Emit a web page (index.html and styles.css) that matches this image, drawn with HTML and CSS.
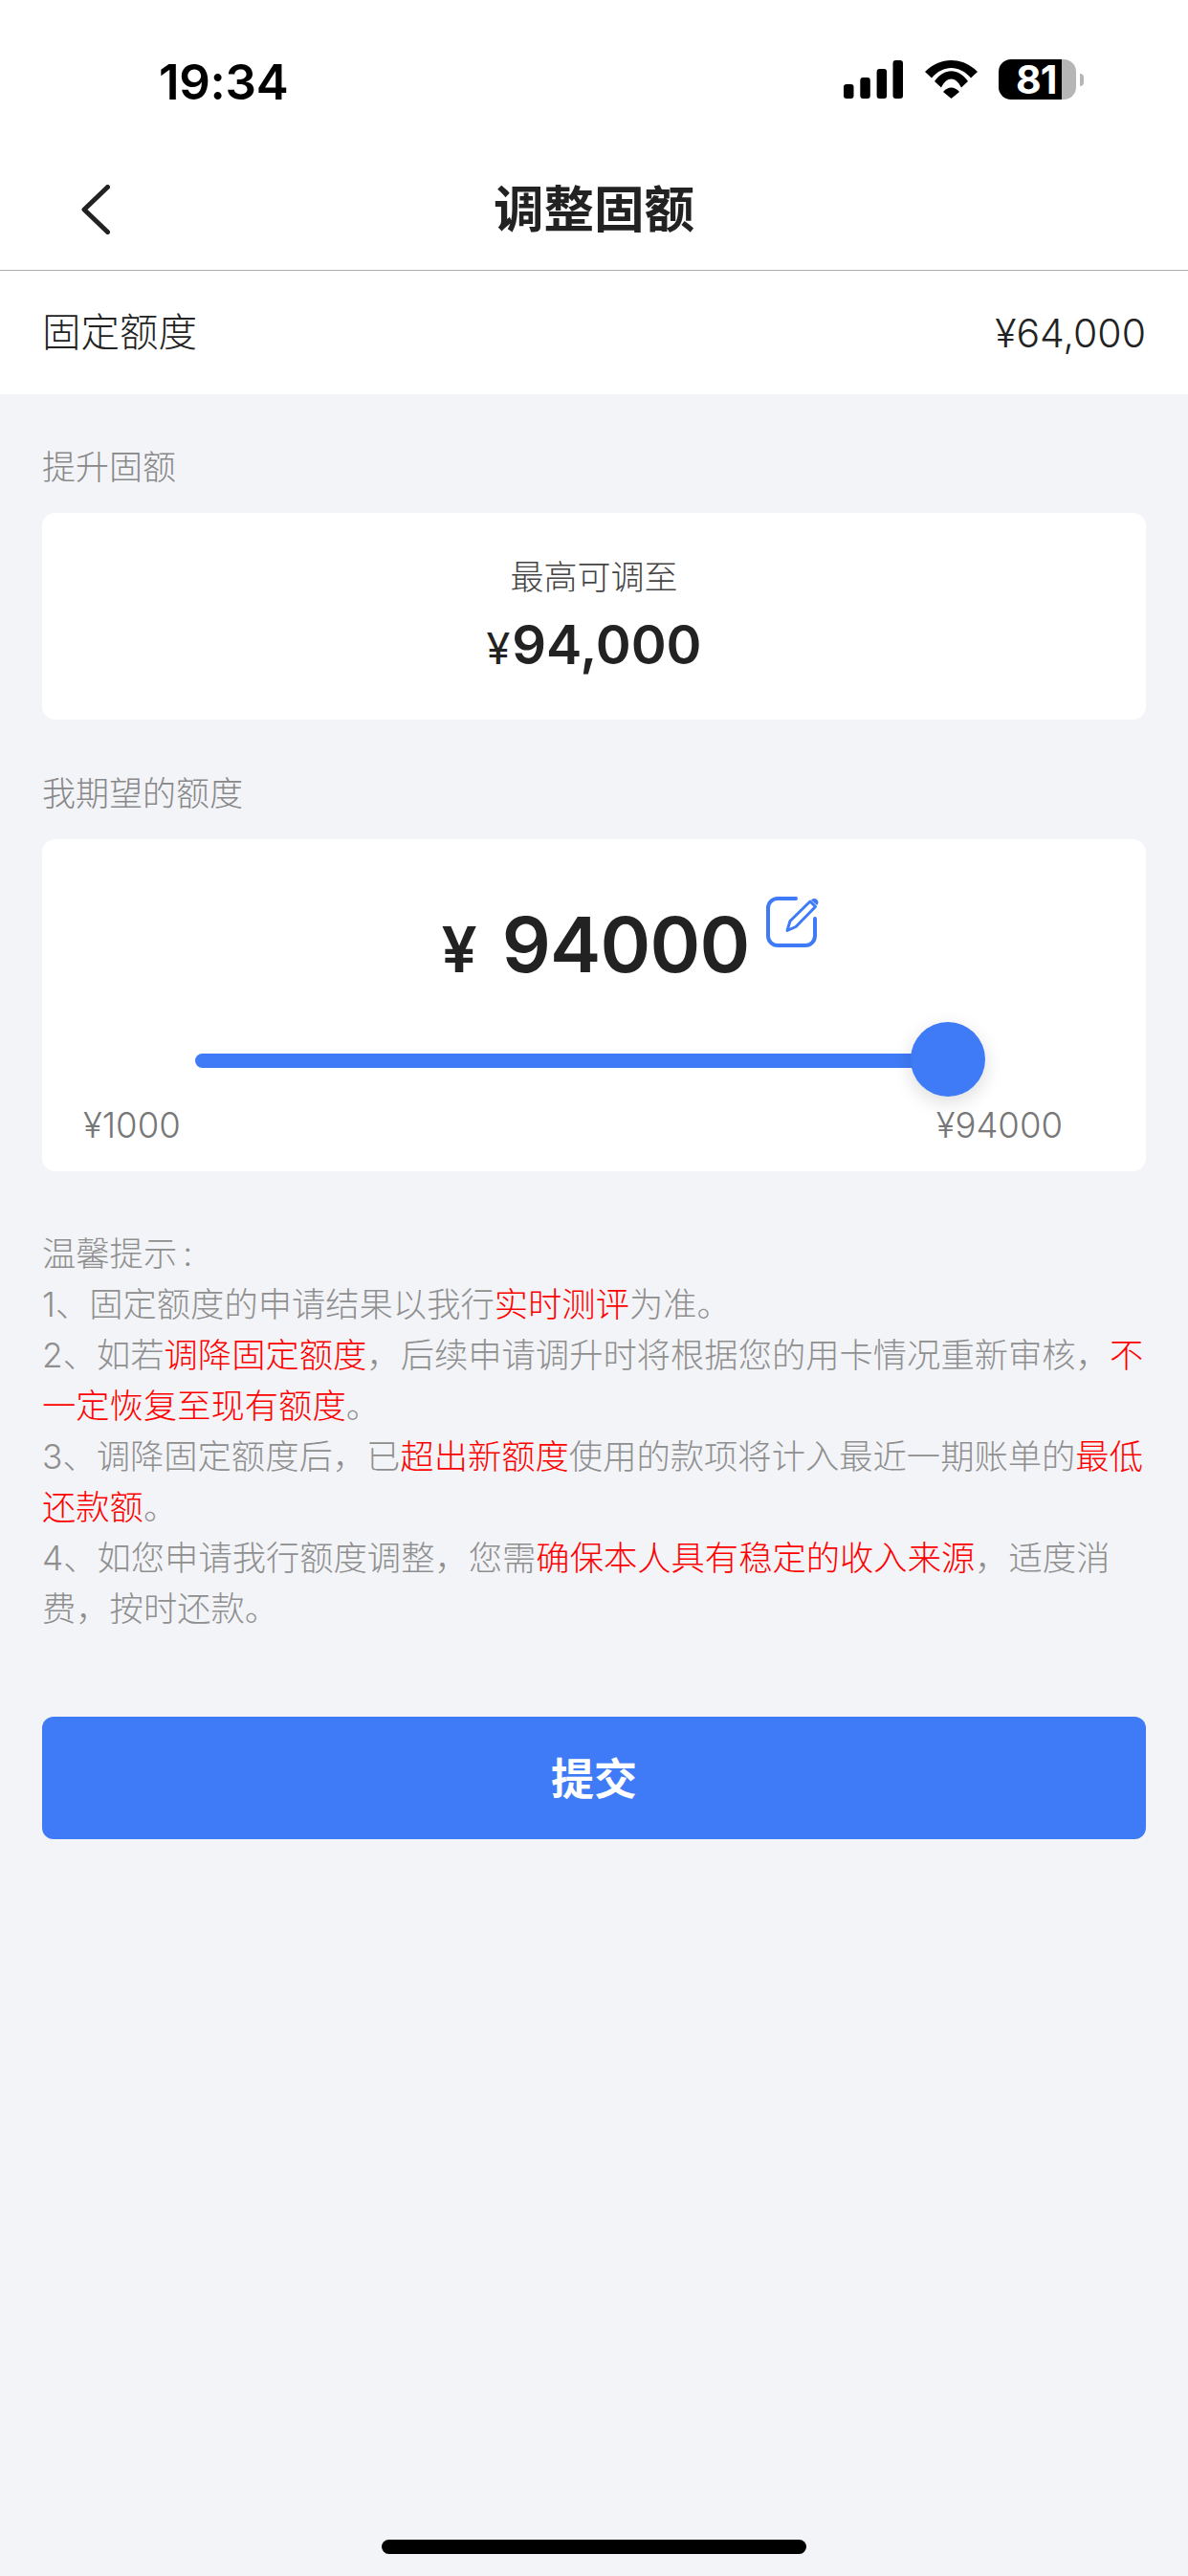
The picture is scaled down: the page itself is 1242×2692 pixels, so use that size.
FILE: index.html
```html
<!DOCTYPE html>
<html lang="zh-CN">
<head>
<meta charset="utf-8">
<title>调整固额</title>
<link rel="stylesheet" href="styles.css">
</head>
<body>
<div class="page">
  <header class="top">
    <div class="status">
      <span class="time">19:34</span>
      <div class="status-icons">
        <svg class="signal" width="62" height="40" viewBox="0 0 62 40"><rect x="0" y="25" width="10.5" height="15" rx="3"/><rect x="17.3" y="18" width="10.5" height="22" rx="3"/><rect x="34.6" y="9" width="10.5" height="31" rx="3"/><rect x="51.5" y="0" width="10.5" height="40" rx="3"/></svg>
        <svg class="wifi" width="55" height="40" viewBox="0 0 55 40"><path d="M0 12C16-4 39-4 55 12L48 18.5C36 4.500 19 4.500 7 18.500Z"/><path d="M10 22C20 7.500 35 7.500 45 22L38 28.500C32 16.500 23 16.500 17 28.500Z"/><path d="M19 33C24 27 31 27 36 33L27.500 40Z"/></svg>
        <div class="battery">
          <div class="battery-body"><span class="battery-num">81</span></div>
          <div class="battery-nub"></div>
        </div>
      </div>
    </div>
    <nav class="nav">
      <svg class="back" width="30" height="52" viewBox="0 0 30 52"><path d="M27.500 2.500L3 26l24.500 23.500"/></svg>
      <h1 class="title">调整固额</h1>
      <span class="nav-end"></span>
    </nav>
    <div class="fixed-row">
      <span class="fixed-label">固定额度</span>
      <span class="num">¥64,000</span>
    </div>
  </header>

  <main class="main">
    <div class="section-label">提升固额</div>
    <section class="card card-max">
      <div class="max-label">最高可调至</div>
      <div class="max-amount"><span class="max-yen">¥</span>94,000</div>
    </section>

    <div class="section-label section-label-next">我期望的额度</div>
    <section class="card card-expect">
      <div class="expect-row">
        <div class="expect-amount">
          <span class="expect-yen">¥</span><span class="expect-num">94000</span>
          <svg class="edit" width="56" height="53" viewBox="0 0 56 53"><path class="edit-box" d="M31 2H12A10 10 0 0 0 2 12V41A10 10 0 0 0 12 51H41A10 10 0 0 0 51 41V23"/><path class="edit-pen" d="M22 35.500L25 25.500L46 5L51.500 10.500L31 31.500Z"/><path class="edit-cap" d="M47 3.500C49 1.500 51 1.500 53 3C55 5 55 7 53 9Z"/></svg>
        </div>
      </div>
      <div class="slider">
        <div class="thumb"></div>
      </div>
      <div class="range">
        <span>¥1000</span>
        <span>¥94000</span>
      </div>
    </section>

    <div class="tips">
      <p>温馨提示<span class="tips-colon">:</span></p>
      <p>1、固定额度的申请结果以我行<em>实时测评</em>为准。</p>
      <p>2、如若<em>调降固定额度</em>，后续申请调升时将根据您的用卡情况重新审核，<em>不一定恢复至现有额度</em>。</p>
      <p>3、调降固定额度后，已<em>超出新额度</em>使用的款项将计入最近一期账单的<em>最低还款额</em>。</p>
      <p>4、如您申请我行额度调整，您需<em>确保本人具有稳定的收入来源</em>，适度消费，按时还款。</p>
    </div>

    <button class="submit"><span class="submit-text">提交</span></button>
  </main>
  <div class="home-indicator"></div>
</div>
</body>
</html>
```
FILE: styles.css
```css
* { box-sizing: border-box; }
html, body { margin: 0; padding: 0; }
body {
  font-family: Inter, "Noto Sans CJK SC", sans-serif;
  color: #222;
  background: #f3f4f8;
}
.page {
  position: relative;
  width: 1242px;
  height: 2692px;
  overflow: hidden;
  display: flex;
  flex-direction: column;
}
.top { background: #fff; }
.status {
  height: 141px;
  padding: 60px 109px 0 166px;
  display: flex;
  justify-content: space-between;
  align-items: flex-start;
}
.time {
  margin-top: 3px;
  font-size: 51px;
  line-height: 46px;
  font-weight: 600;
  color: #000;
  letter-spacing: -0.3px;
}
.status-icons {
  display: flex;
  align-items: center;
  height: 46px;
}
.signal { fill: #000; margin-right: 23px; }
.wifi { fill: #000; margin-right: 22px; }
.battery { display: flex; align-items: center; }
.battery-body {
  width: 81px;
  height: 42px;
  border-radius: 13px;
  background: linear-gradient(90deg, #000 81.5%, #b6b6b6 81.5%);
  display: flex;
  align-items: center;
  padding-left: 18px;
}
.battery-num {
  font-size: 41px;
  line-height: 42px;
  font-weight: 700;
  color: #fff;
  letter-spacing: -1px;
}
.battery-nub {
  width: 4px;
  height: 13px;
  margin-left: 4px;
  border-radius: 0 7px 7px 0;
  background: #b6b6b6;
}
.nav {
  height: 142px;
  padding: 14px 0 0 85px;
  display: grid;
  grid-template-columns: 1fr auto 1fr;
  align-items: center;
  border-bottom: 1px solid #adadad;
}
.back { fill: none; stroke: #222; stroke-width: 5; stroke-linecap: round; stroke-linejoin: round; }
.title {
  margin: 0 0 0 -85px;
  font-size: 52.5px;
  line-height: 70px;
  font-weight: 700;
  color: #222;
}
.fixed-row {
  height: 129px;
  padding: 0 44px;
  display: flex;
  justify-content: space-between;
  align-items: center;
  font-size: 40px;
  color: #222;
}
.fixed-label {
  font-size: 40.5px;
  font-weight: 300;
  margin-bottom: 6px;
}
.num { font-size: 41px; font-weight: 300; }
.main {
  padding: 0 44px;
  display: flex;
  flex-direction: column;
}
.section-label {
  margin-top: 51px;
  height: 50px;
  margin-bottom: 23px;
  font-size: 35px;
  font-weight: 300;
  line-height: 50px;
  color: #888;
}
.section-label-next { margin-top: 52px; }
.card {
  background: #fff;
  border-radius: 14px;
}
.card-max {
  height: 216px;
  padding-top: 42px;
  text-align: center;
}
.max-label {
  font-size: 35px;
  font-weight: 300;
  line-height: 50px;
  color: #444;
}
.max-amount {
  margin-top: 8px;
  font-size: 56px;
  line-height: 76px;
  font-weight: 560;
  color: #222;
}
.max-yen { font-size: 45px; font-weight: 400; margin-right: 2px; }
.card-expect {
  height: 347px;
  padding-top: 60px;
  display: flex;
  flex-direction: column;
}
.expect-row {
  height: 100px;
  padding-left: 3px;
  display: flex;
  justify-content: center;
}
.expect-amount {
  position: relative;
  display: flex;
  align-items: baseline;
  height: 100px;
  line-height: 100px;
  font-weight: 600;
  color: #222;
}
.expect-yen { font-size: 66px; margin-right: 26px; }
.expect-num { font-size: 80px; letter-spacing: -0.8px; }
.edit {
  position: absolute;
  left: calc(100% + 18px);
  top: 0;
  fill: none;
  stroke: #3f7bf6;
}
.edit-box { stroke-width: 4; stroke-linecap: round; }
.edit-pen { stroke-width: 3; stroke-linejoin: round; }
.edit-cap { fill: #3f7bf6; stroke: none; }
.slider {
  position: relative;
  margin: 64px 0 0 160px;
  width: 787px;
  height: 15px;
  border-radius: 8px;
  background: #3f7bf6;
}
.thumb {
  position: absolute;
  right: -39px;
  top: -33px;
  width: 78px;
  height: 78px;
  border-radius: 50%;
  background: #3f7bf6;
  box-shadow: 0 6px 20px rgba(0, 0, 0, 0.14);
}
.range {
  margin-top: 35px;
  padding: 0 87px 0 43px;
  display: flex;
  justify-content: space-between;
  font-size: 36.5px;
  font-weight: 300;
  line-height: 50px;
  color: #777;
}
.tips {
  margin-top: 60px;
  font-size: 35.3px;
  font-weight: 300;
  line-height: 53px;
  color: #8f8f8f;
}
.tips p { margin: 0; }
.tips em { font-style: normal; color: #f00; font-weight: 300; }
.tips-colon { margin-left: 6px; }
.submit {
  margin-top: 86px;
  height: 128px;
  border: 0;
  border-radius: 12px;
  background: #3f7bf6;
  color: #fff;
  font-family: inherit;
  font-size: 45px;
  font-weight: 600;
}
.submit-text { display: block; margin-top: -3px; }
.home-indicator {
  position: absolute;
  left: 399px;
  top: 2654px;
  width: 444px;
  height: 15px;
  border-radius: 8px;
  background: #000;
}
```
